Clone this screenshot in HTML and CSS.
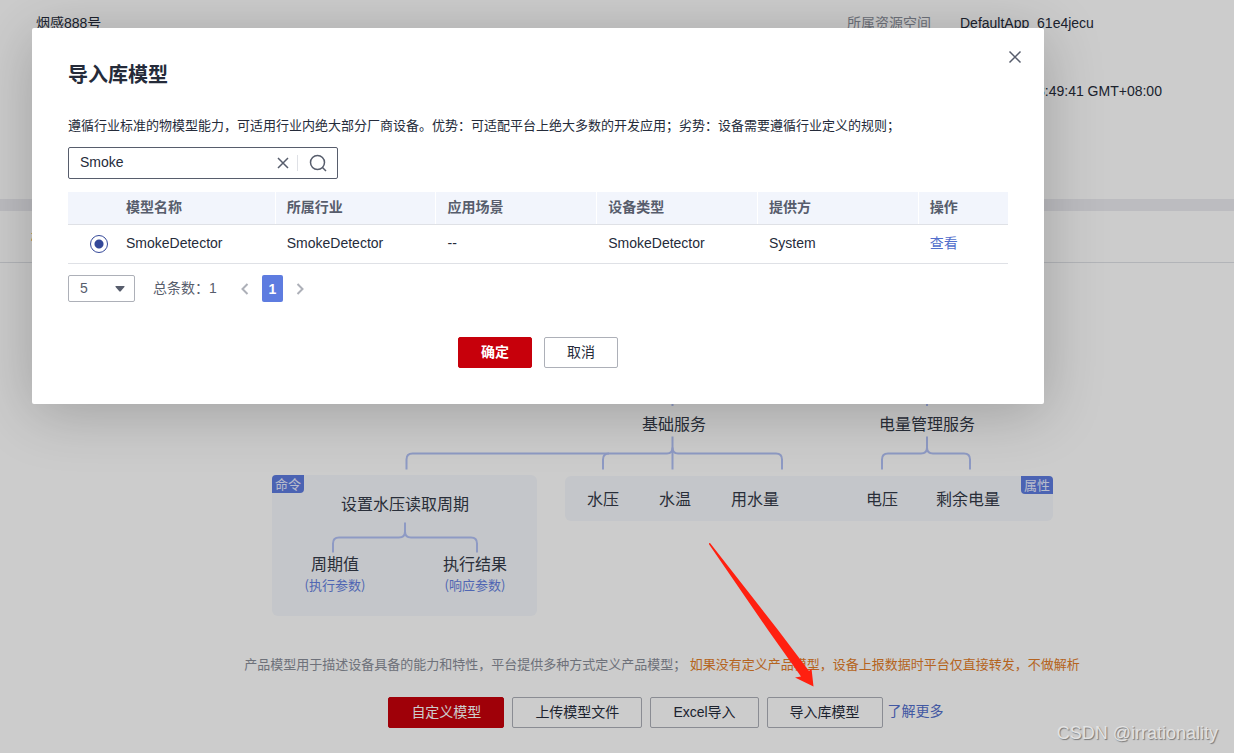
FILE: index.html
```html
<!DOCTYPE html>
<html lang="zh-CN">
<head>
<meta charset="utf-8">
<title>导入库模型</title>
<link rel="stylesheet" href="styles.css">
</head>
<body>
<main class="page">
  <section class="info">
    <span class="info-value">烟感888号</span>
    <span class="info-label">所属资源空间</span>
    <span class="info-value">DefaultApp_61e4jecu</span>
    <span class="info-value info-time">3:49:41 GMT+08:00</span>
  </section>
  <nav class="tabs"><span class="tab">模</span></nav>
  <section class="model">
    <svg class="diagram" viewBox="272 263 781 354" role="img" aria-label="产品模型">
      <rect class="box" x="272" y="475" width="265" height="141" rx="6"/>
      <rect class="box" x="565" y="476" width="488" height="45" rx="6"/>
      <path class="badge" d="M276 475h28v14a4 4 0 0 1-4 4h-28v-14a4 4 0 0 1 4-4z"/>
      <path class="badge" d="M1021 476h28a4 4 0 0 1 4 4v14h-28a4 4 0 0 1-4-4z"/>
      <g class="wire">
        <path d="M672.500 400v6M927 400v6"/>
        <path d="M406.500 469.500v-10q0-6 6-6H667q5.500 0 5.500-6q0 6 5.500 6H776q6 0 6 6v10"/>
        <path d="M672.500 436.500v33M603 469.500v-10q0-6 6-6"/>
        <path d="M882 469.500v-10q0-6 6-6h33q6 0 6-6q0 6 6 6h31q6 0 6 6v10M927 436.500v12"/>
        <path d="M333 552.500v-9q0-6 6-6h60q6 0 6-6q0 6 6 6h60q6 0 6 6v9M405 522.500v10"/>
      </g>
      <g class="node">
        <text x="674" y="430">基础服务</text>
        <text x="927" y="430">电量管理服务</text>
        <text x="405" y="510">设置水压读取周期</text>
        <text x="335" y="570">周期值</text>
        <text x="475" y="570">执行结果</text>
        <text x="603" y="505">水压</text>
        <text x="675" y="505">水温</text>
        <text x="755" y="505">用水量</text>
        <text x="882" y="505">电压</text>
        <text x="968" y="505">剩余电量</text>
      </g>
      <g class="note">
        <text x="335" y="590">(执行参数)</text>
        <text x="475" y="590">(响应参数)</text>
      </g>
      <g class="badge-text">
        <text x="288" y="489">命令</text>
        <text x="1037" y="490">属性</text>
      </g>
    </svg>
    <p class="hint">产品模型用于描述设备具备的能力和特性，平台提供多种方式定义产品模型； <span class="warn">如果没有定义产品模型，设备上报数据时平台仅直接转发，不做解析</span></p>
    <div class="actions">
      <button class="btn btn-primary">自定义模型</button>
      <button class="btn">上传模型文件</button>
      <button class="btn">Excel导入</button>
      <div class="last-action">
        <button class="btn">导入库模型</button>
        <a class="link" href="#">了解更多</a>
      </div>
    </div>
  </section>
</main>

<div class="overlay">
  <section class="dialog" role="dialog" aria-labelledby="dialog-title">
    <button class="close" aria-label="关闭">
      <svg width="14" height="14" viewBox="0 0 14 14"><path d="M1.500 1.500l11 11M12.500 1.500l-11 11"/></svg>
    </button>
    <h1 class="title" id="dialog-title">导入库模型</h1>
    <p class="desc">遵循行业标准的物模型能力，可适用行业内绝大部分厂商设备。优势：可适配平台上绝大多数的开发应用；劣势：设备需要遵循行业定义的规则；</p>
    <div class="search">
      <input class="search-input" type="text" value="Smoke" aria-label="搜索">
      <button class="icon-btn" aria-label="清除">
        <svg width="12" height="12" viewBox="0 0 12 12"><path d="M1 1l10 10M11 1l-10 10"/></svg>
      </button>
      <span class="divider"></span>
      <button class="icon-btn icon-find" aria-label="查找">
        <svg width="18" height="18" viewBox="0 0 18 18"><circle cx="8.500" cy="8.500" r="7"/><path d="M13.500 13.500l3.500 3.500"/></svg>
      </button>
    </div>
    <table class="table">
      <thead>
        <tr><th class="col-pick"></th><th class="col">模型名称</th><th class="col">所属行业</th><th class="col">应用场景</th><th class="col">设备类型</th><th class="col">提供方</th><th>操作</th></tr>
      </thead>
      <tbody>
        <tr>
          <td class="pick"><input class="radio" type="radio" name="model" id="m1" checked></td>
          <td><label for="m1">SmokeDetector</label></td><td>SmokeDetector</td><td>--</td><td>SmokeDetector</td><td>System</td><td><a class="link" href="#">查看</a></td>
        </tr>
      </tbody>
    </table>
    <div class="pager">
      <div class="size">
        <select class="size-select" aria-label="每页条数"><option>5</option></select>
        <svg class="caret" width="10" height="6" viewBox="0 0 10 6"><path d="M1 0h8q1 0 .4.900l-3.700 4.400q-.700.800-1.400 0L.6.900Q0 0 1 0z"/></svg>
      </div>
      <span class="total">总条数：1</span>
      <button class="arrow-btn" aria-label="上一页"><svg width="8" height="12" viewBox="0 0 8 12"><path d="M6.500 1l-5 5 5 5"/></svg></button>
      <button class="current">1</button>
      <button class="arrow-btn" aria-label="下一页"><svg width="8" height="12" viewBox="0 0 8 12"><path d="M1.500 1l5 5-5 5"/></svg></button>
    </div>
    <div class="footer">
      <button class="btn btn-primary btn-strong">确定</button>
      <button class="btn">取消</button>
    </div>
  </section>
</div>

<svg class="pointer" width="106" height="145" viewBox="709 543 106 145"><path d="M708.500 543.500l1.500-.5L778 630 809 671l2.500-2.500 2 18-18.500-9 6-1L768 630z"/></svg>
<span class="watermark">CSDN @irrationality</span>
</body>
</html>
```
FILE: styles.css
```css
* { box-sizing: border-box; }

body {
  margin: 0;
  min-height: 100vh;
  position: relative;
  overflow: hidden;
  background: #fff;
  color: #252b3a;
  font: 14px/20px "Liberation Sans", "Noto Sans CJK SC", sans-serif;
}

button, input, select { font: inherit; color: inherit; }
button { cursor: pointer; }
p, h1 { margin: 0; }
.link { color: #526ecc; text-decoration: none; }

/* Page behind the dialog */
.info {
  display: grid;
  grid-template-columns: 1fr 113px 274px;
  row-gap: 48px;
  padding: 13px 0 98px 36px;
}
.info-label { color: #8a8e99; }
.info-time { grid-column: 3; padding-left: 77px; white-space: nowrap; }

.tabs {
  height: 64px;
  padding: 16px 31px 0;
  border-top: 12px solid #ebecf0;
  border-bottom: 1px solid #dfe1e6;
}
.tab { color: #e37d29; }

.model {
  display: flex;
  flex-direction: column;
  align-items: center;
  padding-left: 90px;
}
.diagram { display: block; width: 781px; max-width: 100%; }
.box { fill: #f6f8fd; }
.badge { fill: #5e7ce0; }
.wire { fill: none; stroke: #b2c1f5; stroke-width: 2; }
.node, .note, .badge-text { text-anchor: middle; font-family: "Noto Sans CJK SC", sans-serif; }
.node { font-size: 16px; fill: #343a48; }
.note { font-size: 13px; fill: #6480e0; }
.badge-text { font-size: 13px; fill: #e6ebff; }

.hint { margin-top: 38px; color: #8a8e99; font-size: 13px; white-space: nowrap; }
.warn { color: #e37d29; }

.actions { display: flex; gap: 8px; margin-top: 22px; padding-left: 8px; }
.last-action { display: flex; gap: 5px; align-items: center; }

.btn {
  height: 31px;
  padding: 0 22px 2px;
  border: 1px solid #adb0b8;
  border-radius: 2px;
  background: #fff;
  white-space: nowrap;
}
.btn-primary { border-color: #c7000b; background: #c7000b; color: #fff; }
.btn-strong { font-weight: 700; }
.last-action .link { padding-bottom: 3px; }

/* Dialog */
.overlay {
  position: absolute;
  inset: 0;
  padding: 28px 190px 0 32px;
  background: rgba(0, 0, 0, 0.2);
}
.dialog {
  position: relative;
  padding: 33px 36px 36px;
  border-radius: 2px;
  background: #fff;
  box-shadow: 0 8px 60px rgba(0, 0, 0, 0.22);
}
.dialog svg { display: block; fill: none; stroke: #575d6c; stroke-width: 2; }
.close {
  position: absolute;
  top: 18px;
  right: 18px;
  padding: 4px;
  border: 0;
  background: none;
}
.dialog .close svg, .dialog .icon-btn svg { stroke-width: 1.5; }
.title { font-size: 20px; line-height: 28px; }
.desc { margin-top: 27px; font-size: 13px; }

.search {
  display: flex;
  align-items: center;
  width: 270px;
  height: 32px;
  margin-top: 11px;
  border: 1px solid #575d6c;
  border-radius: 2px;
}
.search-input {
  flex: 1;
  min-width: 0;
  padding: 0 11px 2px;
  border: 0;
  outline: 0;
  background: none;
}
.icon-btn { padding: 0 8px; border: 0; background: none; }
.icon-find { padding: 0 10px 0 11px; }
.divider { width: 1px; height: 16px; background: #dfe1e6; }

.table {
  width: 100%;
  margin-top: 13px;
  border-collapse: separate;
  border-spacing: 0;
  table-layout: fixed;
}
.table th, .table td { padding: 0 0 2px 11px; border-bottom: 1px solid #dfe1e6; text-align: left; }
.table th { height: 33px; background: #f2f5fc; color: #575d6c; }
.table td { height: 39px; }
.col-pick { width: 5%; }
.col { width: 17.1%; box-shadow: inset -1px 0 #fff; }
.table .pick { padding: 0 7px 0 0; text-align: right; }
.radio {
  display: block;
  appearance: none;
  width: 18px;
  height: 18px;
  margin: 0 0 0 auto;
  border: 1px solid #344899;
  border-radius: 50%;
  background: radial-gradient(circle, #344899 4px, transparent 5px);
}

.pager { display: flex; align-items: center; height: 27px; margin-top: 11px; color: #575d6c; }
.size { position: relative; width: 67px; height: 27px; }
.size-select {
  appearance: none;
  width: 100%;
  height: 100%;
  padding: 0 11px 2px;
  border: 1px solid #adb0b8;
  border-radius: 2px;
  background: #fff;
}
.dialog .caret { position: absolute; top: 11px; right: 10px; fill: #575d6c; stroke: none; pointer-events: none; }
.total { margin: 0 18px; padding-bottom: 2px; }
.arrow-btn { padding: 0 6px; border: 0; background: none; }
.dialog .arrow-btn svg { stroke: #adb0b8; }
.current {
  width: 21px;
  height: 27px;
  margin: 0 7px;
  padding: 0;
  border: 0;
  border-radius: 2px;
  background: #5e7ce0;
  color: #fff;
  font-weight: 700;
}

.footer { display: flex; justify-content: center; gap: 12px; margin-top: 35px; }
.footer .btn { width: 74px; }

/* Annotations over everything */
.pointer { position: absolute; left: 709px; top: 543px; fill: #ff2010; }
.watermark {
  position: absolute;
  right: 16px;
  bottom: 8px;
  color: #e2e2e2;
  font-size: 18px;
  line-height: 24px;
  text-shadow: 1px 1px 1px #777;
}
```
